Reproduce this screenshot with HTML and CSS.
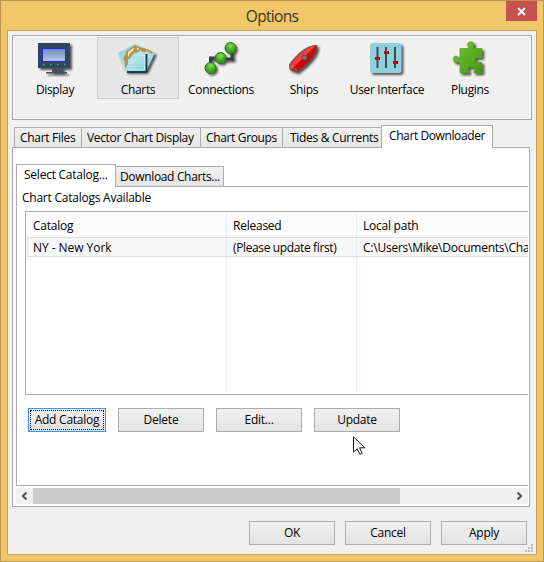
FILE: index.html
```html
<!DOCTYPE html>
<html lang="en">
<head>
<meta charset="utf-8">
<title>Options</title>
<link rel="stylesheet" href="styles.css">
</head>
<body>
<div class="window">
  <header class="titlebar">
    <h1>Options</h1>
    <button class="close" aria-label="Close"><svg width="9" height="9" viewBox="0 0 9 9"><path d="M1 1l7 7M8 1l-7 7" stroke="#fff" stroke-width="1.8"/></svg></button>
  </header>
  <main class="client">
    <nav class="toolbar">
      <div class="tool"><svg width="40" height="40" viewBox="0 0 40 40">
        <defs><linearGradient id="screen" x2="0" y2="1"><stop stop-color="#6c8ab8"/><stop offset="1" stop-color="#b7cbe6"/></linearGradient></defs>
        <g class="shadow"><path d="M3 6h32v25H3z" fill="#2f4663"/><path d="M17 31h11v4h4v1.500H11V35h6z" fill="#4a5058"/></g>
        <path d="M7.500 11.500h23v13h-23z" fill="url(#screen)" stroke="#2424dd"/><path d="M8 27.500h1.500m5.500 0h1.500m5.500 0h1.500m5.500 0h1.500" stroke="#15d521" stroke-width="1.300"/></svg><span>Display</span></div>
      <div class="tool active"><svg width="40" height="40" viewBox="0 0 40 40">
        <defs><linearGradient id="sea" x2="1" y2="1"><stop stop-color="#86cdda"/><stop offset=".5" stop-color="#b4e4ec"/><stop offset="1" stop-color="#7cc6d2"/></linearGradient></defs>
        <path class="shadow" d="M0 16L17 7l20 9-9 19H8z" fill="url(#sea)"/>
        <path d="M8 14.500L17 8l4 2 9 2.500 5 3-1 1.500-5-2.500-4 .5-3-2-2 2.500-3 0-3 2.500-2 3.500-2 .5v5l-2 4h-1l-.5-7-1.500-3 3-4.500z" fill="#b8924a"/>
        <path d="M10 15l6-4.500-1 3.500-3 2-2 4zM18 10.500l3 1-1 2zM28 13l4 2-3-1z" fill="#f6edcf"/>
        <path d="M16 18.500h10.500V33H10" fill="none" stroke="#dcfaff" opacity=".5"/><path d="M28.500 17v18M9 35h20" fill="none" stroke="#1f3c45" stroke-width="1.800"/></svg><span>Charts</span></div>
      <div class="tool"><svg width="40" height="40" viewBox="0 0 40 40">
        <defs><radialGradient id="ball" cx=".5" cy=".3"><stop stop-color="#87df5b"/><stop offset="1" stop-color="#379f15"/></radialGradient></defs>
        <g class="shadow"><path d="M9.500 30v-9h11M20 22h11V12" fill="none" stroke="#2d3e49" stroke-width="3"/><circle cx="29.500" cy="11" r="5.500"/><circle cx="19.500" cy="21" r="5.500"/><circle cx="9.500" cy="31" r="5.500"/></g>
        <g fill="url(#ball)" stroke="#377c25"><circle cx="29.500" cy="11" r="5.500"/><circle cx="19.500" cy="21" r="5.500"/><circle cx="9.500" cy="31" r="5.500"/></g></svg><span>Connections</span></div>
      <div class="tool"><svg width="40" height="40" viewBox="0 0 40 40">
        <defs><linearGradient id="hull" x1=".1" y1=".1" x2=".9" y2=".9"><stop stop-color="#ad1010"/><stop offset=".45" stop-color="#f34a40"/><stop offset=".5" stop-color="#d60606"/><stop offset="1" stop-color="#b80000"/></linearGradient></defs>
        <path class="shadow" d="M33 8.500C25 8 14 15 5.500 27.500l.5 5 7 2.500C24 27 33 18 33 8.500z" fill="url(#hull)" stroke="#555"/><path d="M6 28l7 6" stroke="#c87975"/><circle cx="20.500" cy="20.500" r="2.500" fill="#767676" stroke="#4d5555"/></svg><span>Ships</span></div>
      <div class="tool"><svg width="40" height="40" viewBox="0 0 40 40">
        <rect class="shadow" x="3" y="6" width="31.500" height="30" rx="2.500" fill="#8fd0df"/><path d="M10.500 10v21M19 10v21M28 10v21" stroke="#3f4c50" stroke-width="2"/><path d="M8 20h5v3H8zM17 14h5v3h-5zM26 24h5v3h-5z" fill="#d60000"/><path d="M12 20h1v3h-1zM21 14h1v3h-1zM30 24h1v3h-1z" fill="#400"/></svg><span>User Interface</span></div>
      <div class="tool"><svg width="40" height="40" viewBox="0 0 40 40">
        <defs><linearGradient id="piece" x2="1" y2="1"><stop stop-color="#75c937"/><stop offset="1" stop-color="#44930f"/></linearGradient></defs>
        <path class="shadow" d="M10 11.500h8c2-1-1-2.500-.5-4.500 1-3 6-3 6.500 0 .5 2-2 3.500 0 4.500h8v8.500c-1 2-3 0-5 .5-2.500 1-2 5 .5 5 2 .5 3.500-1.500 4.500.5v10h-8c-1-2 1.500-2 .5-4-1-3-6.500-2.500-6.500.5 0 1.500 2 1.500 1 3.500h-9v-10c-1-2-3 0-5-.5-3-1.500-2-6.500 1-6.500 2 0 2 3 4 .5z" fill="url(#piece)" stroke="#55a51e" stroke-width=".7"/></svg><span>Plugins</span></div>
    </nav>

    <div class="tabs">
      <div class="tab t1"><span>Chart Files</span></div><div class="tab t2"><span>Vector Chart Display</span></div><div class="tab t3"><span>Chart Groups</span></div><div class="tab t4"><span>Tides &amp; Currents</span></div><div class="tab t5 selected"><span>Chart Downloader</span></div>
    </div>
    <section class="page">
      <div class="tabs subtabs">
        <div class="tab s1 selected"><span>Select Catalog...</span></div><div class="tab s2"><span>Download Charts...</span></div>
      </div>
      <div class="subpage">
        <div class="caption"><span>Chart Catalogs Available</span></div>
        <div class="list">
          <div class="row head"><div><span>Catalog</span></div><div><span>Released</span></div><div><span>Local path</span></div></div>
          <div class="row item"><div><span class="region">NY - New York</span></div><div><span class="please">(Please update first)</span></div><div><span class="path">C:\Users\Mike\Documents\Cha</span></div></div>
          <div class="row rest"><div></div><div></div><div></div></div>
        </div>
        <div class="actions">
          <button class="btn focused"><span>Add Catalog</span></button><button class="btn"><span>Delete</span></button><button class="btn"><span>Edit...</span></button><button class="btn"><span>Update</span></button>
        </div>
      </div>
      <div class="scroll">
        <div class="arrow"><svg width="7" height="8" viewBox="0 0 7 8"><path d="M5.500.5L2 4l3.500 3.500" fill="none" stroke="#505050" stroke-width="2"/></svg></div>
        <div class="thumb"></div>
        <div class="arrow end"><svg width="7" height="8" viewBox="0 0 7 8"><path d="M1.500.5L5 4 1.500 7.500" fill="none" stroke="#505050" stroke-width="2"/></svg></div>
      </div>
    </section>
    <footer class="footer">
      <button class="btn"><span>OK</span></button><button class="btn"><span>Cancel</span></button><button class="btn"><span>Apply</span></button>
    </footer>
    <svg class="grip" width="8" height="8" viewBox="0 0 8 8"><path d="M6 0h2v2H6zM3 3h2v2H3zM6 3h2v2H6zM0 6h2v2H0zM3 6h2v2H3zM6 6h2v2H6z" fill="#bcbcbc"/></svg>
  </main>
  <svg class="cursor" width="13" height="20" viewBox="0 0 13 20"><path d="M.5.800v15.400l3.700-3.500 2.600 5.700 2.400-1-2.600-5.600h5.200z" fill="#fff" stroke="#1c1c28"/></svg>
</div>
</body>
</html>
```
FILE: styles.css
```css
* { box-sizing: border-box; }
body {
  margin: 0;
  font: 12px/16px "Open Sans", "Noto Sans", sans-serif;
  color: #000;
  overflow: hidden;
}
span { white-space: nowrap; letter-spacing: -0.24px; }
button { font: inherit; color: inherit; padding: 0; margin: 0; }
svg { display: block; }
.window {
  position: relative;
  width: 544px;
  height: 562px;
  padding: 0 6px 6px;
  background: #f0c869;
  border: 1px solid #b99650;
}
.titlebar { height: 29px; display: flex; justify-content: center; position: relative; }
h1 { margin: 0; font-size: 15.5px; font-weight: 400; line-height: 30px; color: #3b3325; letter-spacing: -0.7px; }
.close {
  position: absolute;
  right: 0;
  top: 0;
  width: 31px;
  height: 20px;
  border: 0;
  background: #c75050;
  display: grid;
  place-items: center;
}
.client {
  position: relative;
  height: 525px;
  border: 1px solid #c9a356;
  background: #f0f0f0;
  padding: 4px 4px 0;
}
.toolbar {
  width: 520px;
  height: 85px;
  border: 1px solid #a5a5a5;
  box-shadow: inset 0 0 0 1px #fff;
  padding: 1px;
  display: flex;
  gap: 1px;
}
.tool {
  width: 82px;
  height: 62px;
  border: 1px solid transparent;
  display: flex;
  flex-direction: column;
  align-items: center;
}
.tool svg { margin-top: -1px; }
.tool span { margin-top: 5px; letter-spacing: -0.33px; }
.tool.active { background: #e6e6e6; border-color: #cbcbcb; }
.shadow { filter: drop-shadow(2px 2px 1px rgba(0, 0, 0, .65)); }
.tabs { display: flex; align-items: flex-end; height: 28px; padding-left: 2px; position: relative; margin-bottom: -1px; }
.tab {
  height: 21px;
  border: 1px solid #acacac;
  border-right-width: 0;
  background: linear-gradient(#f0f0f0, #e6e6e6);
  line-height: 20px;
  padding-left: 5px;
}
.t1 { width: 67px; }
.t1 span, .t4 span { letter-spacing: -0.3px; }
.t2 { width: 119px; }
.t2 span, .t3 span { letter-spacing: -0.35px; }
.t3 { width: 82px; }
.t4 { width: 99px; padding-left: 7px; }
.tab.selected {
  height: 23px;
  border-right-width: 1px;
  border-bottom: 0;
  background: #fff;
  padding-left: 7px;
  line-height: 20px;
}
.t5 { width: 112px; }
.t5 span { letter-spacing: -0.4px; }
.page {
  width: 518px;
  height: 360px;
  border: 1px solid #acacac;
  background: #fff;
  padding: 16px 1px 0 3px;
}
.subtabs { height: 23px; padding-left: 0; }
.s1 { width: 100px; }
.s2 { width: 108px; padding-left: 4px; border-right-width: 1px; border-left: 0; }
.s2 span { letter-spacing: -0.34px; }
.subpage {
  height: 300px;
  border: 1px solid #acacac;
  border-right: 0;
  padding: 3px 0 0 8px;
}
.caption { height: 21px; margin-left: -3px; }
.list { height: 184px; border: 1px solid #acacac; border-right: 0; padding: 1px 0 0 1px; }
.row { display: grid; grid-template-columns: 200px 130px 1fr; }
.row > div { border-right: 1px solid #e4eff9; padding-left: 6px; overflow: hidden; }
.row > div:last-child { border-right: 0; }
.head { height: 24px; line-height: 25px; background: #fcfcfc; }
.item { height: 20px; line-height: 19px; background: #f7f7f7; border: solid #dedede; border-width: 1px 0 1px 1px; grid-template-columns: 199px 130px 1fr; }
.item > div:first-child { padding-left: 5px; }
.region { letter-spacing: -0.05px; }
.please { letter-spacing: -0.37px; }
.rest { height: 135px; }
.actions { display: flex; gap: 12px; margin: 13px 0 0 3px; }
.btn {
  width: 86px;
  height: 24px;
  border: 1px solid #acacac;
  background: linear-gradient(#f1f1f1, #e4e4e4);
  line-height: 22px;
  text-align: center;
}
.focused { width: 78px; border-color: #3399ff; padding: 1px; }
.focused span { display: block; border: 1px dotted #000; line-height: 18px; height: 20px; }
.scroll { display: flex; height: 16px; margin-top: 2px; background: #f0f0f0; }
.arrow { width: 17px; display: grid; place-items: center; }
.thumb { width: 367px; background: #cdcdcd; }
.end { margin-left: auto; }
.footer { display: flex; justify-content: flex-end; gap: 10px; padding: 14px 5px 0 0; }
.grip { position: absolute; right: 3px; bottom: 2px; }
.cursor { position: absolute; left: 352px; top: 435px; }
```
